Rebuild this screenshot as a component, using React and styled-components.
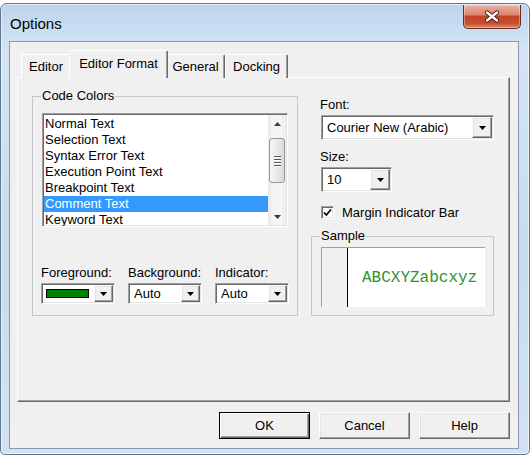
import React from "react"
import styled, { createGlobalStyle } from "styled-components"

const GlobalStyle = createGlobalStyle`
  html, body { margin: 0; padding: 0; background: #ffffff; }
  body {
    font-family: "Liberation Sans", Arial, sans-serif;
    font-size: 13px;
    color: #000;
  }
  * { box-sizing: border-box; }
`

// classic 3D edges
const sunken = `
  border: 1px solid;
  border-color: #a0a0a0 #ffffff #ffffff #a0a0a0;
  box-shadow: inset 1px 1px 0 #696969, inset -1px -1px 0 #e3e3e3;
`
const raised = `
  border: 1px solid;
  border-color: #ffffff #696969 #696969 #ffffff;
  box-shadow: inset -1px -1px 0 #a0a0a0, inset 1px 1px 0 #e3e3e3;
`

const Window = styled.div`
  width: 530px;
  height: 452px;
  margin-top: 3px;
  border: 1px solid #60758f;
  border-radius: 7px 7px 5px 5px;
  background: linear-gradient(180deg, #bdd3eb 0%, #d4e4f5 10%, #c8dbef 55%, #d2e2f3 100%);
  box-shadow: inset 0 0 0 1px rgba(255, 255, 255, 0.55);
  padding: 0 10px 5px 8px;
  display: flex;
  flex-direction: column;
`

const TitleBar = styled.div`
  height: 37px;
  display: flex;
  justify-content: space-between;
  align-items: flex-start;
`

const Title = styled.div`
  padding: 11px 0 0 1px;
  font-size: 15px;
  line-height: 18px;
  color: #000;
`

const CloseButton = styled.div`
  width: 58px;
  height: 24px;
  margin: 1px -2px 0 0;
  border: 1px solid #6b2a1f;
  border-top: none;
  border-radius: 0 0 5px 5px;
  background: linear-gradient(180deg, #eab0a2 0%, #dd8470 42%, #c2432a 50%, #c64d2f 78%, #dd8a62 100%);
  box-shadow: inset 0 0 0 1px rgba(255, 255, 255, 0.35);
  display: flex;
  align-items: center;
  justify-content: center;
`

const Client = styled.div`
  height: 408px;
  background: #f0f0f0;
  border: 1px solid #8797ad;
  padding: 9px 8px 9px 7px;
  display: flex;
  flex-direction: column;
`

const TabStrip = styled.div`
  height: 27px;
  display: flex;
  align-items: flex-end;
  padding-left: 4px;
  margin-bottom: -1px;
  position: relative;
  z-index: 1;
`

const Tab = styled.div`
  width: ${p => p.$w}px;
  height: ${p => (p.$active ? 28 : 24)}px;
  margin: 0 ${p => (p.$active ? -2 : 0)}px;
  padding-bottom: ${p => (p.$active ? 3 : 0)}px;
  position: relative;
  z-index: ${p => (p.$active ? 2 : 1)};
  background: #f0f0f0;
  border: 1px solid;
  border-bottom: none;
  border-color: #ffffff #696969 transparent #ffffff;
  border-radius: 2px 2px 0 0;
  box-shadow: inset -1px 0 0 #a0a0a0;
  display: flex;
  align-items: center;
  justify-content: center;
  white-space: nowrap;
`

const TabPanel = styled.div`
  flex: 1;
  background: #f0f0f0;
  border: 1px solid;
  border-color: #ffffff #696969 #696969 #ffffff;
  box-shadow: inset -1px -1px 0 #a0a0a0;
  padding: 10px 0 0 14px;
  display: grid;
  grid-template-columns: 266px 183px;
  column-gap: 13px;
  align-items: start;
`

const Group = styled.fieldset`
  margin: 0;
  min-width: 0;
  padding: ${p => p.$pad};
  border: 1px solid #c3c7cb;
`

const Legend = styled.legend`
  padding: 0 1px;
  margin-left: ${p => p.$ml || 0}px;
  line-height: 16px;
`

const ListBox = styled.div`
  ${sunken}
  width: 246px;
  height: 114px;
  margin: 9px 0 0 1px;
  background: #ffffff;
  padding: 1px;
  display: flex;
  overflow: hidden;
`

const Items = styled.div`
  flex: 1;
  padding-top: 1px;
`

const Item = styled.div`
  height: 16px;
  line-height: 16px;
  padding-left: 1px;
  white-space: nowrap;
  background: ${p => (p.$selected ? "#3399ff" : "transparent")};
  color: ${p => (p.$selected ? "#ffffff" : "#000000")};
`

const ScrollBar = styled.div`
  width: 18px;
  background: linear-gradient(90deg, #e9e9e9 0%, #f5f5f5 30%, #f5f5f5 70%, #ececec 100%);
  display: flex;
  flex-direction: column;
`

const ScrollArrow = styled.div`
  height: 17px;
  display: flex;
  align-items: center;
  justify-content: center;
`

const Track = styled.div`
  flex: 1;
  padding: 6px 1px 0 1px;
`

const Thumb = styled.div`
  height: 45px;
  border: 1px solid #989898;
  border-radius: 3px;
  background: linear-gradient(90deg, #f4f4f4 0%, #e9e9e9 50%, #d8d8d8 100%);
  display: flex;
  flex-direction: column;
  align-items: center;
  justify-content: center;
  gap: 2px;
`

const Grip = styled.div`
  width: 7px;
  height: 1px;
  background: #555;
  box-shadow: 0 1px 0 #fff;
`

const ColorRow = styled.div`
  margin-top: 38px;
  display: grid;
  grid-template-columns: repeat(3, 74px);
  column-gap: 13px;
`

const Field = styled.div`
  display: flex;
  flex-direction: column;
  gap: 2px;
`

const Label = styled.div`
  line-height: 16px;
  margin-left: ${p => p.$ml || 0}px;
  margin-top: ${p => p.$mt || 0}px;
  white-space: nowrap;
`

const Combo = styled.div`
  ${sunken}
  width: ${p => p.$w}px;
  height: ${p => p.$h}px;
  margin-left: ${p => p.$ml || 0}px;
  margin-top: ${p => p.$mt || 0}px;
  background: #ffffff;
  padding: 1px;
  display: flex;
`

const ComboValue = styled.div`
  flex: 1;
  display: flex;
  align-items: center;
  padding-left: ${p => p.$pl || 4}px;
  white-space: nowrap;
  overflow: hidden;
`

const Swatch = styled.div`
  width: 43px;
  height: 9px;
  border: 1px solid #000;
  background: ${p => p.$color};
`

const DropButton = styled.div`
  ${raised}
  width: ${p => p.$w || 18}px;
  background: #f0f0f0;
  display: flex;
  align-items: center;
  justify-content: center;
`

const RightCol = styled.div`
  padding-top: 9px;
  display: flex;
  flex-direction: column;
`

const CheckRow = styled.label`
  margin: 12px 0 0 10px;
  height: 16px;
  display: flex;
  align-items: center;
  gap: 8px;
`

const CheckBox = styled.div`
  ${sunken}
  width: 13px;
  height: 13px;
  background: #ffffff;
  display: flex;
  align-items: center;
  justify-content: center;
`

const SampleBox = styled.div`
  height: 60px;
  display: flex;
  background: #ffffff;
  border-top: 1px solid #a0a0a0;
  border-left: 1px solid #a0a0a0;
`

const Gutter = styled.div`
  width: 26px;
  background: #f0f0f0;
  border-right: 1px solid #000;
`

const SampleText = styled.div`
  flex: 1;
  display: flex;
  align-items: center;
  padding-left: 14px;
  font-family: "Liberation Mono", "Courier New", monospace;
  font-size: 16px;
  color: #2f932f;
`

const ButtonRow = styled.div`
  margin-top: 10px;
  display: flex;
  justify-content: flex-end;
  gap: 9px;
`

const Button = styled.button`
  width: 91px;
  height: 27px;
  font-family: "Liberation Sans", Arial, sans-serif;
  font-size: 13px;
  color: #000;
  background: #f0f0f0;
  padding: 0;
  ${p =>
    p.$default
      ? `border: 1px solid #000;
         box-shadow: inset 1px 1px 0 #fff, inset -1px -1px 0 #696969, inset -2px -2px 0 #a0a0a0;`
      : raised}
`

const DownArrow = () => (
  <svg width="7" height="4" viewBox="0 0 7 4">
    <path d="M0 0h7L3.5 4z" fill="#000" />
  </svg>
)

const UpArrow = () => (
  <svg width="7" height="4" viewBox="0 0 7 4">
    <path d="M0 4h7L3.5 0z" fill="#3c3c3c" />
  </svg>
)

const codeItems = [
  "Normal Text",
  "Selection Text",
  "Syntax Error Text",
  "Execution Point Text",
  "Breakpoint Text",
  "Comment Text",
  "Keyword Text",
]

const tabs = [
  { name: "Editor", w: 50 },
  { name: "Editor Format", w: 99, active: true },
  { name: "General", w: 59 },
  { name: "Docking", w: 63 },
]

export default function App() {
  return (
    <>
      <GlobalStyle />
      <Window>
        <TitleBar>
          <Title>Options</Title>
          <CloseButton>
            <svg width="16" height="13" viewBox="0 0 16 13">
              <path d="M3 2.5L13 10.5M13 2.5L3 10.5" stroke="#4a1d16" strokeWidth="4.2" strokeLinecap="round" />
              <path d="M3 2.5L13 10.5M13 2.5L3 10.5" stroke="#ffffff" strokeWidth="2.4" strokeLinecap="round" />
            </svg>
          </CloseButton>
        </TitleBar>

        <Client>
          <TabStrip>
            {tabs.map(t => (
              <Tab key={t.name} $w={t.w} $active={t.active}>
                {t.name}
              </Tab>
            ))}
          </TabStrip>

          <TabPanel>
            <Group $pad="0 9px 11px 8px">
              <Legend>Code Colors</Legend>
              <ListBox>
                <Items>
                  {codeItems.map(item => (
                    <Item key={item} $selected={item === "Comment Text"}>
                      {item}
                    </Item>
                  ))}
                </Items>
                <ScrollBar>
                  <ScrollArrow><UpArrow /></ScrollArrow>
                  <Track>
                    <Thumb>
                      <Grip />
                      <Grip />
                      <Grip />
                      <Grip />
                    </Thumb>
                  </Track>
                  <ScrollArrow>
                    <svg width="7" height="4" viewBox="0 0 7 4">
                      <path d="M0 0h7L3.5 4z" fill="#3c3c3c" />
                    </svg>
                  </ScrollArrow>
                </ScrollBar>
              </ListBox>

              <ColorRow>
                <Field>
                  <Label>Foreground:</Label>
                  <Combo $w={74} $h={21}>
                    <ComboValue $pl={3}>
                      <Swatch $color="#008000" />
                    </ComboValue>
                    <DropButton $w={19}><DownArrow /></DropButton>
                  </Combo>
                </Field>
                <Field>
                  <Label>Background:</Label>
                  <Combo $w={74} $h={21}>
                    <ComboValue>Auto</ComboValue>
                    <DropButton $w={19}><DownArrow /></DropButton>
                  </Combo>
                </Field>
                <Field>
                  <Label>Indicator:</Label>
                  <Combo $w={74} $h={21}>
                    <ComboValue>Auto</ComboValue>
                    <DropButton $w={19}><DownArrow /></DropButton>
                  </Combo>
                </Field>
              </ColorRow>
            </Group>

            <RightCol>
              <Label $ml={9}>Font:</Label>
              <Combo $w={173} $h={25} $ml={10} $mt={2}>
                <ComboValue $pl={4}>Courier New (Arabic)</ComboValue>
                <DropButton $w={20}><DownArrow /></DropButton>
              </Combo>

              <Label $ml={9} $mt={9}>Size:</Label>
              <Combo $w={71} $h={25} $ml={10} $mt={2}>
                <ComboValue $pl={4}>10</ComboValue>
                <DropButton $w={20}><DownArrow /></DropButton>
              </Combo>

              <CheckRow>
                <CheckBox>
                  <svg width="9" height="9" viewBox="0 0 9 9">
                    <path d="M1 4.5L3.4 7L8 1.5" stroke="#000" strokeWidth="1.7" fill="none" />
                  </svg>
                </CheckBox>
                Margin Indicator Bar
              </CheckRow>

              <Group $pad="3px 8px 8px 9px" style={{ marginTop: 8 }}>
                <Legend $ml={-1}>Sample</Legend>
                <SampleBox>
                  <Gutter />
                  <SampleText>ABCXYZabcxyz</SampleText>
                </SampleBox>
              </Group>
            </RightCol>
          </TabPanel>

          <ButtonRow>
            <Button $default>OK</Button>
            <Button>Cancel</Button>
            <Button>Help</Button>
          </ButtonRow>
        </Client>
      </Window>
    </>
  )
}
